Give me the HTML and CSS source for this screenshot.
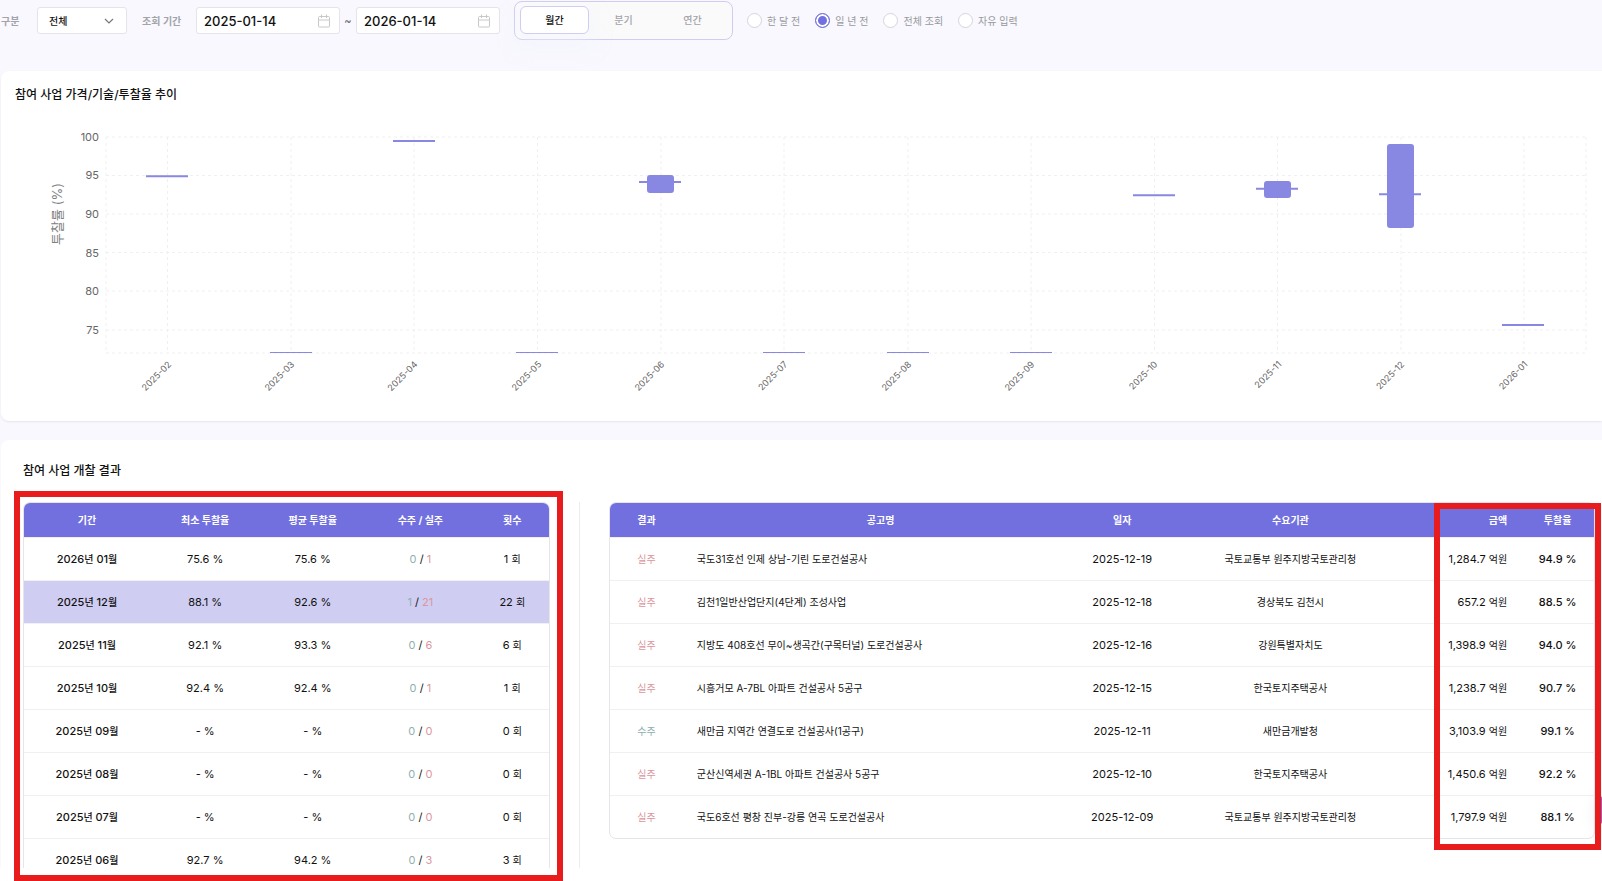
FILE: index.html
```
<!DOCTYPE html>
<html lang="ko">
<head>
<meta charset="utf-8">
<title>참여 사업 개찰 결과</title>
<link rel="stylesheet" href="styles.css">
</head>
<body>
<main class="page">
  <form class="filters">
    <label class="filter-label" for="kind">구분</label>
    <span class="select-wrap">
      <select id="kind" class="select"><option>전체</option></select>
      <svg class="chevron" viewBox="0 0 10 6" aria-hidden="true"><path d="M1 1l4 4 4-4"/></svg>
    </span>
    <label class="filter-label period-label" for="from">조회 기간</label>
    <span class="date-range">
      <span class="date"><input id="from" type="text" value="2025-01-14"><svg class="calendar" viewBox="0 0 14 14" aria-hidden="true"><rect x="1.5" y="2.5" width="11" height="10.5" rx="1"/><path d="M1.5 6h11M4.5 .5v3.500M9.500 .5v3.500"/></svg></span>
      <span class="tilde">~</span>
      <span class="date"><input id="to" type="text" value="2026-01-14" aria-label="종료일"><svg class="calendar" viewBox="0 0 14 14" aria-hidden="true"><rect x="1.5" y="2.5" width="11" height="10.5" rx="1"/><path d="M1.5 6h11M4.5 .5v3.500M9.500 .5v3.500"/></svg></span>
    </span>
    <div class="segment">
      <button type="button" class="segment-item active">월간</button>
      <button type="button" class="segment-item">분기</button>
      <button type="button" class="segment-item">연간</button>
    </div>
    <div class="radios">
      <label class="radio"><input type="radio" name="range">한 달 전</label>
      <label class="radio"><input type="radio" name="range" checked>일 년 전</label>
      <label class="radio"><input type="radio" name="range">전체 조회</label>
      <label class="radio"><input type="radio" name="range">자유 입력</label>
    </div>
  </form>

  <section class="card chart-card">
    <h2 class="card-title">참여 사업 가격/기술/투찰율 추이</h2>
    <svg class="chart" viewBox="0 0 1601 290" role="img" aria-label="투찰률 추이">
      <g class="grid">
        <path d="M105 21H1585M105 59.500H1585M105 98H1585M105 136.500H1585M105 175H1585M105 214H1585M105 237H1585"/>
        <path d="M105 21V237M166.500 21V237M290 21V237M413 21V237M536.500 21V237M660 21V237M783 21V237M907 21V237M1030 21V237M1153.500 21V237M1276.500 21V237M1400 21V237M1523 21V237M1585 21V237"/>
      </g>
      <g class="y-ticks">
        <text x="98" y="25">100</text><text x="98" y="63">95</text><text x="98" y="102">90</text>
        <text x="98" y="141">85</text><text x="98" y="179">80</text><text x="98" y="218">75</text>
      </g>
      <text class="y-title" transform="translate(61 98) rotate(-90)">투찰률 (%)</text>
      <g class="boxes">
        <rect x="646" y="59" width="27" height="18" rx="3"/>
        <rect x="1263" y="65" width="27" height="17" rx="3"/>
        <rect x="1386" y="28" width="27" height="84" rx="3"/>
      </g>
      <path class="averages" d="M145 60.300h42M392 25h42M638 66h42M1132 79.300h42M1255 72.700h42M1378 78.300h42M1501 209h42"/>
      <path class="averages empty" d="M269 236.500h42M515 236.500h42M762 236.500h42M886 236.500h42M1009 236.500h42"/>
      <g class="x-ticks">
        <text transform="translate(171 249) rotate(-45)">2025-02</text>
        <text transform="translate(294 249) rotate(-45)">2025-03</text>
        <text transform="translate(417 249) rotate(-45)">2025-04</text>
        <text transform="translate(541 249) rotate(-45)">2025-05</text>
        <text transform="translate(664 249) rotate(-45)">2025-06</text>
        <text transform="translate(787 249) rotate(-45)">2025-07</text>
        <text transform="translate(911 249) rotate(-45)">2025-08</text>
        <text transform="translate(1034 249) rotate(-45)">2025-09</text>
        <text transform="translate(1157 249) rotate(-45)">2025-10</text>
        <text transform="translate(1281 249) rotate(-45)">2025-11</text>
        <text transform="translate(1404 249) rotate(-45)">2025-12</text>
        <text transform="translate(1527 249) rotate(-45)">2026-01</text>
      </g>
    </svg>
  </section>

  <section class="card result-card">
    <h2 class="card-title">참여 사업 개찰 결과</h2>
    <div class="result-grid">
      <div class="table-box summary">
        <div class="table-scroll">
        <table>
          <colgroup><col class="c-period"><col class="c-min"><col class="c-avg"><col class="c-score"><col class="c-count"></colgroup>
          <thead><tr><th>기간</th><th>최소 투찰율</th><th>평균 투찰율</th><th>수주 / 실주</th><th>횟수</th></tr></thead>
          <tbody>
            <tr><td class="strong">2026<span class="hangul">년</span> 01<span class="hangul">월</span></td><td>75.6 %</td><td>75.6 %</td><td><span class="win">0</span> / <span class="loss">1</span></td><td>1 <span class="hangul">회</span></td></tr>
            <tr class="selected"><td class="strong">2025<span class="hangul">년</span> 12<span class="hangul">월</span></td><td>88.1 %</td><td>92.6 %</td><td><span class="win">1</span> / <span class="loss">21</span></td><td>22 <span class="hangul">회</span></td></tr>
            <tr><td class="strong">2025<span class="hangul">년</span> 11<span class="hangul">월</span></td><td>92.1 %</td><td>93.3 %</td><td><span class="win">0</span> / <span class="loss">6</span></td><td>6 <span class="hangul">회</span></td></tr>
            <tr><td class="strong">2025<span class="hangul">년</span> 10<span class="hangul">월</span></td><td>92.4 %</td><td>92.4 %</td><td><span class="win">0</span> / <span class="loss">1</span></td><td>1 <span class="hangul">회</span></td></tr>
            <tr><td class="strong">2025<span class="hangul">년</span> 09<span class="hangul">월</span></td><td>- %</td><td>- %</td><td><span class="win">0</span> / <span class="loss">0</span></td><td>0 <span class="hangul">회</span></td></tr>
            <tr><td class="strong">2025<span class="hangul">년</span> 08<span class="hangul">월</span></td><td>- %</td><td>- %</td><td><span class="win">0</span> / <span class="loss">0</span></td><td>0 <span class="hangul">회</span></td></tr>
            <tr><td class="strong">2025<span class="hangul">년</span> 07<span class="hangul">월</span></td><td>- %</td><td>- %</td><td><span class="win">0</span> / <span class="loss">0</span></td><td>0 <span class="hangul">회</span></td></tr>
            <tr><td class="strong">2025<span class="hangul">년</span> 06<span class="hangul">월</span></td><td>92.7 %</td><td>94.2 %</td><td><span class="win">0</span> / <span class="loss">3</span></td><td>3 <span class="hangul">회</span></td></tr>
          </tbody>
        </table>
        </div>
      </div>
      <div class="divider"></div>
      <div class="table-box detail">
        <table>
          <colgroup><col class="d-result"><col class="d-name"><col class="d-date"><col class="d-org"><col class="d-price"><col class="d-rate"></colgroup>
          <thead><tr><th>결과</th><th>공고명</th><th>일자</th><th>수요기관</th><th class="price">금액</th><th>투찰율</th></tr></thead>
          <tbody>
            <tr><td class="hangul loss">실주</td><td class="hangul name">국도31호선 인제 상남-기린 도로건설공사</td><td>2025-12-19</td><td class="hangul">국토교통부 원주지방국토관리청</td><td class="price">1,284.7 <span class="hangul">억원</span></td><td class="strong">94.9 %</td></tr>
            <tr><td class="hangul loss">실주</td><td class="hangul name">김천1일반산업단지(4단계) 조성사업</td><td>2025-12-18</td><td class="hangul">경상북도 김천시</td><td class="price">657.2 <span class="hangul">억원</span></td><td class="strong">88.5 %</td></tr>
            <tr><td class="hangul loss">실주</td><td class="hangul name">지방도 408호선 무이~생곡간(구목터널) 도로건설공사</td><td>2025-12-16</td><td class="hangul">강원특별자치도</td><td class="price">1,398.9 <span class="hangul">억원</span></td><td class="strong">94.0 %</td></tr>
            <tr><td class="hangul loss">실주</td><td class="hangul name">시흥거모 A-7BL 아파트 건설공사 5공구</td><td>2025-12-15</td><td class="hangul">한국토지주택공사</td><td class="price">1,238.7 <span class="hangul">억원</span></td><td class="strong">90.7 %</td></tr>
            <tr><td class="hangul win">수주</td><td class="hangul name">새만금 지역간 연결도로 건설공사(1공구)</td><td>2025-12-11</td><td class="hangul">새만금개발청</td><td class="price">3,103.9 <span class="hangul">억원</span></td><td class="strong">99.1 %</td></tr>
            <tr><td class="hangul loss">실주</td><td class="hangul name">군산신역세권 A-1BL 아파트 건설공사 5공구</td><td>2025-12-10</td><td class="hangul">한국토지주택공사</td><td class="price">1,450.6 <span class="hangul">억원</span></td><td class="strong">92.2 %</td></tr>
            <tr><td class="hangul loss">실주</td><td class="hangul name">국도6호선 평창 진부-강릉 연곡 도로건설공사</td><td>2025-12-09</td><td class="hangul">국토교통부 원주지방국토관리청</td><td class="price">1,797.9 <span class="hangul">억원</span></td><td class="strong">88.1 %</td></tr>
          </tbody>
        </table>
      </div>
    </div>
  </section>
</main>
<button type="button" class="chat-button" aria-label="문의"></button>
</body>
</html>
```
FILE: styles.css
```
*, *::before, *::after { box-sizing: border-box; }

body {
  margin: 0;
  min-height: 100vh;
  background: #fff;
  color: #111;
  font-family: Inter, "Noto Sans CJK KR", sans-serif;
  font-size: 11px;
  line-height: 16px;
}

.page { background: #f8f8fe; }

/* filter bar */
.filters {
  display: flex;
  align-items: center;
  height: 71px;
  padding: 1px 0 31px 1px;
}
.filter-label { width: 36px; color: #a3a3a8; font-size: 10px; font-weight: 600; }
.period-label { width: 40px; margin: 0 14px 0 15px; white-space: nowrap; }
.select-wrap { position: relative; display: flex; }
.select {
  width: 90px;
  height: 27px;
  padding: 0 11px;
  border: 1px solid #e4e4ea;
  border-radius: 3px;
  background: #fff;
  color: #111;
  appearance: none;
  font: 500 10px/16px Inter, "Noto Sans CJK KR", sans-serif;
}
.chevron { position: absolute; right: 13px; top: 11px; width: 10px; height: 6px; fill: none; stroke: #777; stroke-width: 1.2; }
.date-range { display: flex; align-items: center; }
.date {
  display: flex;
  align-items: center;
  justify-content: space-between;
  width: 144px;
  height: 27px;
  padding: 0 8px 0 7px;
  border: 1px solid #e4e4ea;
  border-radius: 3px;
  background: #fff;
}
.date input {
  width: 100px;
  padding: 0;
  border: 0;
  outline: 0;
  background: none;
  color: #111;
  font: 500 13px/16px Inter, sans-serif;
}
.calendar { width: 14px; height: 14px; fill: none; stroke: #c8c8c8; }
.tilde { width: 16px; text-align: center; color: #666; }
.segment {
  display: flex;
  height: 39px;
  margin-left: 14px;
  padding: 4px 5px;
  border: 1px solid #cfcdf4;
  border-radius: 8px;
  background: #fafafb;
}
.segment-item {
  width: 69px;
  height: 28px;
  padding: 0;
  border: 1px solid transparent;
  border-radius: 6px;
  background: none;
  color: #a3a3a8;
  font: 500 10px/16px Inter, "Noto Sans CJK KR", sans-serif;
}
.segment-item.active {
  border-color: #cfcdf4;
  background: #fff;
  color: #111;
  box-shadow: 0 10px 20px #f2f6fd80;
}
.radios { display: flex; gap: 15px; margin-left: 14px; }
.radio { display: flex; align-items: center; gap: 5px; color: #98989c; font-size: 10px; }
.radio input {
  width: 15px;
  height: 15px;
  margin: 0;
  border: 1px solid #d5d5da;
  border-radius: 50%;
  background: #fff;
  appearance: none;
}
.radio input:checked { border-color: #7270df; background: #7270df; box-shadow: inset 0 0 0 2px #fff; }

/* cards */
.card {
  margin-left: 1px;
  border-radius: 8px 0 0 8px;
  background: #fff;
}
.card-title { margin: 0; font-size: 12px; font-weight: 500; line-height: 18px; }
.chart-card { padding: 15px 0; box-shadow: 0 1px 2px #e6e6f0; }
.chart-card .card-title { padding-left: 14px; }
.result-card { margin-top: 19px; padding: 22px 7px 0 22px; border-bottom-left-radius: 0; }

/* chart */
.chart { display: block; width: 100%; margin-top: 12px; }
.grid { fill: none; stroke: #f0f0f0; stroke-dasharray: 3 3; }
.y-ticks { fill: #666; font-size: 11px; text-anchor: end; }
.x-ticks { fill: #666; font-size: 9px; text-anchor: end; }
.y-title { fill: #808080; font-size: 13px; text-anchor: middle; }
.boxes { fill: #8888e3; }
.averages { fill: none; stroke: #8888e3; stroke-width: 2; }
.averages.empty { stroke-width: 1; }

/* result tables */
.result-grid {
  display: grid;
  grid-template-columns: 527fr 1px 986fr;
  grid-template-rows: 100%;
  column-gap: 29px;
  height: 366px;
  margin-top: 22px;
}
.divider { background: #ededf0; }
.table-box {
  position: relative;
  border: 1px solid #e5e5ea;
  border-radius: 7px;
}
.summary { border-bottom: 0; border-bottom-left-radius: 0; border-bottom-right-radius: 0; }
.table-scroll { height: 100%; overflow: hidden; }
.detail { align-self: start; }
.summary::after,
.detail::after {
  content: "";
  position: absolute;
  z-index: 2;
  border: 6px solid #e81c1c;
  pointer-events: none;
}
.summary::after { inset: -12px -14px -13px -10px; }
.detail::after { top: 0; right: -7px; bottom: -12px; width: 167px; }
table { width: 100%; table-layout: fixed; border-collapse: separate; border-spacing: 0; }
th {
  height: 34px;
  padding: 0;
  background: #7270df;
  color: #fff;
  font-size: 10px;
  font-weight: 700;
}
th:first-child { border-top-left-radius: 6px; }
th:last-child { border-top-right-radius: 6px; }
td { height: 43px; padding: 0; border-top: 1px solid #f0f0f3; text-align: center; white-space: nowrap; }
.selected td { background: #cfcdf2; }
.hangul { font-size: 10px; }
.strong { font-weight: 500; }
.name { padding-left: 14px; text-align: left; }
.price { padding-right: 14px; text-align: right; }
.win { color: #8fb0ae; }
.loss { color: #dc969c; }

.c-period { width: 24%; }
.c-min { width: 21%; }
.c-avg { width: 20%; }
.c-score { width: 21%; }
.c-count { width: 14%; }
.d-result { width: 7.400%; }
.d-name { width: 40.200%; }
.d-date { width: 8.900%; }
.d-org { width: 25.300%; }
.d-price { width: 10.800%; }
.d-rate { width: 7.400%; }

.chat-button {
  position: fixed;
  z-index: 1;
  right: -52px;
  bottom: 43px;
  width: 56px;
  height: 56px;
  border: 0;
  border-radius: 50%;
  background: #8a5fd6;
  box-shadow: 0 4px 20px #00000018;
}
```
